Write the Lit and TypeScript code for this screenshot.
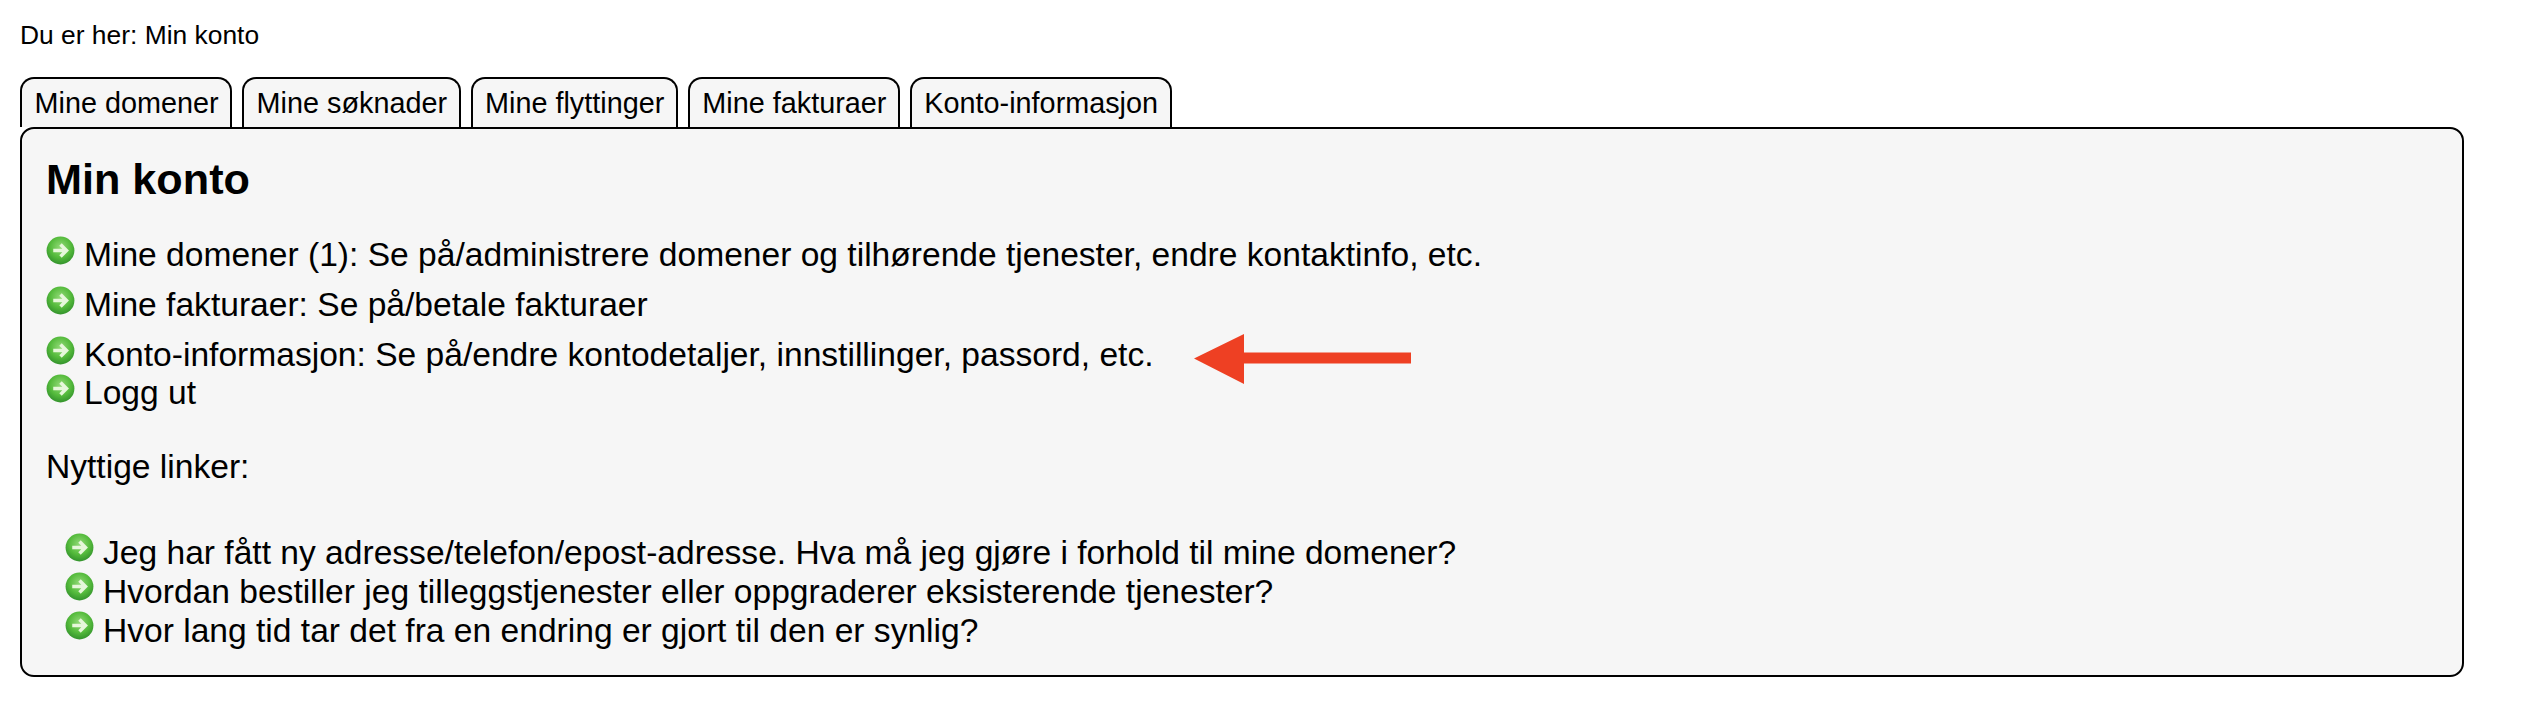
import { LitElement, html, css, svg } from "lit";
import { customElement } from "lit/decorators.js";

const icon = () => html`<svg class="ic" viewBox="0 0 30 30" aria-hidden="true">
  <defs>
    <radialGradient id="g" cx="50%" cy="38%" r="62%">
      <stop offset="0" stop-color="#93da78"/>
      <stop offset="0.6" stop-color="#55bb3c"/>
      <stop offset="1" stop-color="#33932c"/>
    </radialGradient>
  </defs>
  <circle cx="15" cy="15" r="14.4" fill="url(#g)"/>
  ${svg`<path d="M7.5 15h13M15 8.8l6.2 6.2-6.2 6.2" fill="none" stroke="#e6f7da" stroke-width="3.6"/>`}
</svg>`;

@customElement("app-root")
export class AppRoot extends LitElement {
  static styles = css`
    :host { display: block; font-family: "Liberation Sans", Arial, sans-serif; color: #000; background: #fff; height: 714px; box-sizing: border-box; padding: 20px 60px 0 20px; }
    .crumb { font-size: 26.4px; line-height: 30px; height: 57px; }
    .tabs { display: flex; gap: 10px; height: 50px; }
    .tab { font-size: 28.8px; line-height: 48px; padding: 0 11.5px 0 12.5px; border: 2px solid #000; border-bottom: 0; border-radius: 14px 14px 0 0; background: #f6f6f6; }
    .panel { position: relative; box-sizing: border-box; height: 550px; border: 2.5px solid #000; border-radius: 14px; background: #f6f6f6; padding: 25px 0 0 24px; }
    h1 { font-size: 43.2px; line-height: 50px; margin: 0 0 32px; font-weight: 700; }
    .row { display: flex; align-items: flex-start; font-size: 33.6px; line-height: 38px; }
    .row .ic { width: 29px; height: 29px; flex: none; margin: 0 9px 0 0; }
    .gap { margin-bottom: 12px; }
    .nyttige { font-size: 33.6px; line-height: 38px; margin: 36px 0 47px; }
    .links { padding-left: 19px; }
    .links .row { line-height: 39px; }
    .arrow { position: absolute; left: 1172px; top: 204px; }
  `;

  render() {
    return html`
      <div class="crumb">Du er her: Min konto</div>
      <div class="tabs">
        ${["Mine domener", "Mine søknader", "Mine flyttinger", "Mine fakturaer", "Konto-informasjon"].map(t => html`<div class="tab">${t}</div>`)}
      </div>
      <div class="panel">
        <h1>Min konto</h1>
        <div class="row gap">${icon()}<span>Mine domener (1): Se på/administrere domener og tilhørende tjenester, endre kontaktinfo, etc.</span></div>
        <div class="row gap">${icon()}<span>Mine fakturaer: Se på/betale fakturaer</span></div>
        <div class="row">${icon()}<span>Konto-informasjon: Se på/endre kontodetaljer, innstillinger, passord, etc.</span></div>
        <div class="row">${icon()}<span>Logg ut</span></div>
        <div class="nyttige">Nyttige linker:</div>
        <div class="links">
          <div class="row">${icon()}<span>Jeg har fått ny adresse/telefon/epost-adresse. Hva må jeg gjøre i forhold til mine domener?</span></div>
          <div class="row">${icon()}<span>Hvordan bestiller jeg tilleggstjenester eller oppgraderer eksisterende tjenester?</span></div>
          <div class="row">${icon()}<span>Hvor lang tid tar det fra en endring er gjort til den er synlig?</span></div>
        </div>
        <svg class="arrow" width="218" height="52" viewBox="0 0 218 52"><path d="M0 25.5 50 1v18.5h167v11H50V51z" fill="#ee4023"/></svg>
      </div>
    `;
  }
}
